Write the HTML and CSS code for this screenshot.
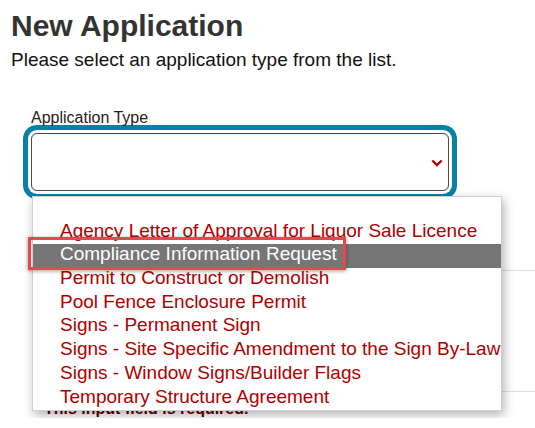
FILE: index.html
```html
<!DOCTYPE html>
<html lang="en">
<head>
  <meta charset="UTF-8" />
  <title>New Application</title>
  <link rel="stylesheet" href="styles.css">
</head>
<body>
  <div class="page">
    <h1>New Application</h1>
    <p class="intro">Please select an application type from the list.</p>

    <div class="field">
      <label class="field-label">Application Type</label>
      <div class="select-ring">
        <div class="select-box">
          <svg class="chevron" width="12" height="8" viewBox="0 0 12 8">
            <path d="M1.3 1.5 L6 6 L10.7 1.5" fill="none" stroke="#b00000" stroke-width="2.4"/>
          </svg>
        </div>
      </div>

      <div class="behind">
        <div class="behind-row first"></div>
        <div class="behind-row second"></div>
        <div class="error">This input field is required.</div>
      </div>

      <ul class="options">
        <li class="option">&nbsp;</li>
        <li class="option">Agency Letter of Approval for Liquor Sale Licence</li>
        <li class="option selected">Compliance Information Request</li>
        <li class="option">Permit to Construct or Demolish</li>
        <li class="option">Pool Fence Enclosure Permit</li>
        <li class="option">Signs - Permanent Sign</li>
        <li class="option">Signs - Site Specific Amendment to the Sign By-Law</li>
        <li class="option">Signs - Window Signs/Builder Flags</li>
        <li class="option">Temporary Structure Agreement</li>
      </ul>
      <div class="callout"></div>
    </div>
  </div>
</body>
</html>
```

FILE: styles.css
```css
body {
  margin: 0;
  background: white;
  font-family: 'Liberation Sans', Arial, sans-serif;
  overflow: hidden;
}

.page {
  padding: 0 11px;
}

h1 {
  margin: 0;
  padding-top: 8px;
  font-size: 30px;
  line-height: 36px;
  color: #333;
}

.intro {
  margin: 5px 0 0;
  font-size: 19px;
  line-height: 22px;
  color: #111;
}

.field {
  position: relative;
  margin-top: 37px;
  padding-left: 20px;
}

.field-label {
  display: block;
  font-size: 16px;
  line-height: 19px;
  color: #222;
  margin-bottom: 6px;
}

.select-ring {
  width: 418px;
  border-radius: 6px;
  box-shadow: 0 0 0 3px white, 0 0 0 8px #0b7fa6;
}

.select-box {
  height: 56px;
  border: 1px solid #4a4a50;
  border-radius: 6px;
  display: flex;
  align-items: center;
  justify-content: flex-end;
  padding-right: 5px;
}

.chevron {
  margin-top: 1px;
}

.behind {
  margin-left: 10px;
  margin-right: -11px;
}

.behind-row {
  border-bottom: 1px solid #ddd;
}

.behind-row.first {
  height: 79px;
}

.behind-row.second {
  height: 120px;
}

.error {
  padding: 7px 0 0 3px;
  font-size: 16px;
  line-height: 19px;
  font-weight: bold;
  color: #5c0000;
}

.options {
  position: absolute;
  left: 21px;
  top: 88px;
  width: 468px;
  margin: 0;
  padding: 0;
  list-style: none;
  background: white;
  border: 1px solid #cfcfcf;
  box-shadow: 2px 4px 10px rgba(0, 0, 0, 0.3);
}

.option {
  height: 20px;
  line-height: 20px;
  padding: 0 0 3.7px 27px;
  font-size: 19px;
  color: #b00000;
  white-space: nowrap;
}

.option.selected {
  background: #767676;
  color: white;
}

.callout {
  position: absolute;
  left: 17px;
  top: 129px;
  width: 312px;
  height: 27px;
  border: 3px solid #e8474c;
  box-shadow: 0 1px 4px rgba(0, 0, 0, 0.4);
}
```
